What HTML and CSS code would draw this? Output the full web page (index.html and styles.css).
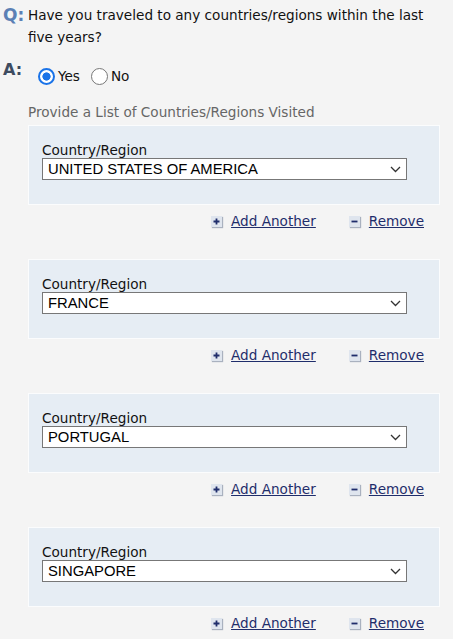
FILE: index.html
```html
<!DOCTYPE html>
<html lang="en">
<head>
<meta charset="utf-8">
<title>Travel history</title>
<link rel="stylesheet" href="styles.css">
</head>
<body>
<div class="qa">
  <div class="qa-row">
    <span class="q-label">Q:</span>
    <p class="q-text">Have you traveled to any countries/regions within the last five years?</p>
  </div>
  <div class="qa-row answer">
    <span class="a-label">A:</span>
    <label class="radio"><input type="radio" name="trav" checked><span>Yes</span></label>
    <label class="radio"><input type="radio" name="trav"><span>No</span></label>
  </div>
</div>

<div class="list">
  <p class="list-title">Provide a List of Countries/Regions Visited</p>

  <div class="entry">
    <div class="box">
      <div class="field-label">Country/Region</div>
      <div class="select-wrap">
        <div class="select">UNITED STATES OF AMERICA</div>
        <svg class="chev" width="11" height="7" viewBox="0 0 11 7"><path d="M1 1 L5.5 5.5 L10 1" fill="none" stroke="#333" stroke-width="1.3"/></svg>
      </div>
    </div>
    <div class="actions">
      <span class="icon"><svg width="11" height="11" viewBox="0 0 11 11"><path d="M5.5 2.5v6M2.5 5.5h6" stroke="#1f2d6b" stroke-width="1.8"/></svg></span><a href="#">Add Another</a>
      <span class="icon minus"><svg width="11" height="11" viewBox="0 0 11 11"><path d="M2.5 5.5h6" stroke="#1f2d6b" stroke-width="1.8"/></svg></span><a href="#">Remove</a>
    </div>
  </div>

  <div class="entry">
    <div class="box">
      <div class="field-label">Country/Region</div>
      <div class="select-wrap">
        <div class="select">FRANCE</div>
        <svg class="chev" width="11" height="7" viewBox="0 0 11 7"><path d="M1 1 L5.5 5.5 L10 1" fill="none" stroke="#333" stroke-width="1.3"/></svg>
      </div>
    </div>
    <div class="actions">
      <span class="icon"><svg width="11" height="11" viewBox="0 0 11 11"><path d="M5.5 2.5v6M2.5 5.5h6" stroke="#1f2d6b" stroke-width="1.8"/></svg></span><a href="#">Add Another</a>
      <span class="icon minus"><svg width="11" height="11" viewBox="0 0 11 11"><path d="M2.5 5.5h6" stroke="#1f2d6b" stroke-width="1.8"/></svg></span><a href="#">Remove</a>
    </div>
  </div>

  <div class="entry">
    <div class="box">
      <div class="field-label">Country/Region</div>
      <div class="select-wrap">
        <div class="select">PORTUGAL</div>
        <svg class="chev" width="11" height="7" viewBox="0 0 11 7"><path d="M1 1 L5.5 5.5 L10 1" fill="none" stroke="#333" stroke-width="1.3"/></svg>
      </div>
    </div>
    <div class="actions">
      <span class="icon"><svg width="11" height="11" viewBox="0 0 11 11"><path d="M5.5 2.5v6M2.5 5.5h6" stroke="#1f2d6b" stroke-width="1.8"/></svg></span><a href="#">Add Another</a>
      <span class="icon minus"><svg width="11" height="11" viewBox="0 0 11 11"><path d="M2.5 5.5h6" stroke="#1f2d6b" stroke-width="1.8"/></svg></span><a href="#">Remove</a>
    </div>
  </div>

  <div class="entry">
    <div class="box">
      <div class="field-label">Country/Region</div>
      <div class="select-wrap">
        <div class="select">SINGAPORE</div>
        <svg class="chev" width="11" height="7" viewBox="0 0 11 7"><path d="M1 1 L5.5 5.5 L10 1" fill="none" stroke="#333" stroke-width="1.3"/></svg>
      </div>
    </div>
    <div class="actions">
      <span class="icon"><svg width="11" height="11" viewBox="0 0 11 11"><path d="M5.5 2.5v6M2.5 5.5h6" stroke="#1f2d6b" stroke-width="1.8"/></svg></span><a href="#">Add Another</a>
      <span class="icon minus"><svg width="11" height="11" viewBox="0 0 11 11"><path d="M2.5 5.5h6" stroke="#1f2d6b" stroke-width="1.8"/></svg></span><a href="#">Remove</a>
    </div>
  </div>
</div>
</body>
</html>
```

FILE: styles.css
```css
html, body {
  margin: 0;
  padding: 0;
  background: #f4f4f4;
}
body {
  font-family: "DejaVu Sans", Verdana, sans-serif;
  font-size: 13.6px;
  color: #111;
  padding: 4px 13px 0 3px;
}
p { margin: 0; }

.qa-row {
  display: flex;
  align-items: flex-start;
}
.q-label {
  width: 25px;
  flex: none;
  font-weight: bold;
  font-size: 17px;
  line-height: 22px;
  color: #5b80b5;
}
.q-text {
  line-height: 22px;
}
.answer {
  margin-top: 14px;
  height: 28px;
  align-items: center;
}
.a-label {
  align-self: flex-start;
  width: 35px;
  flex: none;
  font-weight: bold;
  font-size: 16px;
  line-height: 16px;
  color: #3d4b60;
}
.radio {
  display: flex;
  align-items: center;
  margin-right: 11px;
}
.radio input {
  appearance: none;
  -webkit-appearance: none;
  width: 17px;
  height: 17px;
  margin: 0 3px 0 0;
  border: 1px solid #777;
  border-radius: 50%;
  background: #fff;
}
.radio input:checked {
  border: 2px solid #1a73e8;
  background: radial-gradient(circle, #1a73e8 0 3.8px, #fff 4.4px);
}

.list {
  padding-left: 25px;
}
.list-title {
  margin-top: 13px;
  line-height: 18px;
  color: #666;
}
.entry {
  margin-top: 4px;
  margin-bottom: 30px;
}
.box {
  background: #e6edf4;
  border: 1px solid #fbfcfd;
  padding: 16px 32px 24px 13px;
}
.field-label {
  line-height: 16px;
  color: #111;
}
.select-wrap {
  position: relative;
}
.select {
  height: 22px;
  box-sizing: border-box;
  border: 1px solid #777;
  background: #fff;
  font-family: "Liberation Sans", Arial, sans-serif;
  font-size: 14.8px;
  line-height: 20px;
  padding-left: 5px;
  color: #000;
}
.chev {
  position: absolute;
  right: 6px;
  top: 8px;
}
.actions {
  display: flex;
  justify-content: flex-end;
  align-items: center;
  height: 16px;
  margin-top: 8px;
  padding-right: 16px;
}
.icon {
  width: 11px;
  height: 11px;
  background: #dfe5ee;
  box-shadow: 1px 1px 1px #a9b1bf;
  display: flex;
  margin-right: 9px;
}
.minus {
  margin-left: 33px;
}
.actions a {
  color: #1f2d6b;
  text-decoration: underline;
  line-height: 16px;
}
```
